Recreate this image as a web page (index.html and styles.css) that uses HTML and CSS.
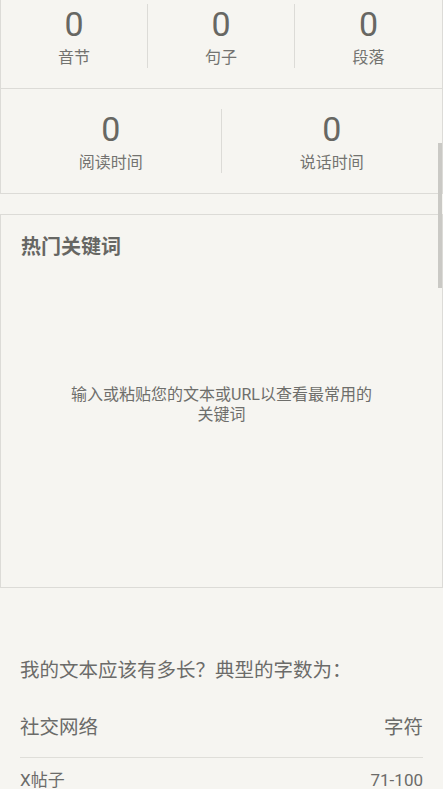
FILE: index.html
```html
<!DOCTYPE html>
<html lang="zh-CN">
<head>
<meta charset="utf-8">
<title>统计</title>
<link rel="stylesheet" href="styles.css">
</head>
<body>
<main class="page">
  <section class="card card-top">
    <div class="stats stats-3">
      <div class="stat"><div class="stat-num">0</div><div class="stat-label">音节</div></div>
      <div class="stat"><div class="stat-num">0</div><div class="stat-label">句子</div></div>
      <div class="stat"><div class="stat-num">0</div><div class="stat-label">段落</div></div>
    </div>
  </section>
  <section class="card card-mid">
    <div class="stats stats-2">
      <div class="stat"><div class="stat-num">0</div><div class="stat-label">阅读时间</div></div>
      <div class="stat"><div class="stat-num">0</div><div class="stat-label">说话时间</div></div>
    </div>
  </section>
  <section class="card card-keywords">
    <h2 class="kw-title">热门关键词</h2>
    <p class="kw-empty">输入或粘贴您的文本或URL以查看最常用的关键词</p>
  </section>
  <section class="lengths">
    <h3 class="lengths-title">我的文本应该有多长？典型的字数为：</h3>
    <div class="row row-head"><span>社交网络</span><span>字符</span></div>
    <div class="row"><span>X帖子</span><span>71-100</span></div>
  </section>
</main>
<div class="scroll-thumb"></div>
</body>
</html>
```
FILE: styles.css
```css
html {
  overflow: hidden;
  height: 100%;
}
body {
  margin: 0;
  height: 100%;
  background: #f6f5f1;
  color: #6b6b69;
  font-family: "Roboto", "Noto Sans CJK SC", sans-serif;
}
.page {
  width: 443px;
}
.card {
  box-sizing: border-box;
  border: 1px solid #dcdbd7;
}
.card-top {
  border-top: none;
  padding: 4px 0 20px;
}
.card-mid {
  border-top: none;
  padding: 20px 0;
}
.stats {
  display: grid;
}
.stats-3 {
  grid-template-columns: repeat(3, 1fr);
}
.stats-2 {
  grid-template-columns: repeat(2, 1fr);
}
.stat {
  height: 64px;
  text-align: center;
  border-right: 1px solid #dcdbd7;
}
.stat:last-child {
  border-right: none;
}
.stat-num {
  font-size: 34px;
  line-height: 40px;
  color: #676763;
}
.stat-label {
  margin-top: 4px;
  font-size: 16px;
  line-height: 20px;
  color: #737370;
}
.card-keywords {
  margin-top: 20px;
  height: 374px;
  padding: 20px;
}
.kw-title {
  margin: 0;
  font-size: 20px;
  line-height: 24px;
  font-weight: bold;
  color: #666663;
}
.kw-empty {
  margin: 126px auto 0;
  max-width: 306px;
  text-align: center;
  font-size: 16px;
  line-height: 20px;
  color: #6e6e6b;
}
.lengths {
  padding: 0 20px;
}
.lengths-title {
  margin: 69px 0 0;
  font-size: 19.5px;
  line-height: 28px;
  font-weight: normal;
  color: #6b6b69;
}
.row {
  display: flex;
  justify-content: space-between;
  font-size: 17px;
  line-height: 24px;
  padding-top: 10px;
}
.row-head {
  margin-top: 29px;
  padding-top: 0;
  padding-bottom: 15px;
  font-size: 19.5px;
  line-height: 28px;
  border-bottom: 1px solid #dfded9;
}
.scroll-thumb {
  position: fixed;
  top: 143px;
  right: 1px;
  width: 4px;
  height: 145px;
  background: #cac9c5;
}
```
